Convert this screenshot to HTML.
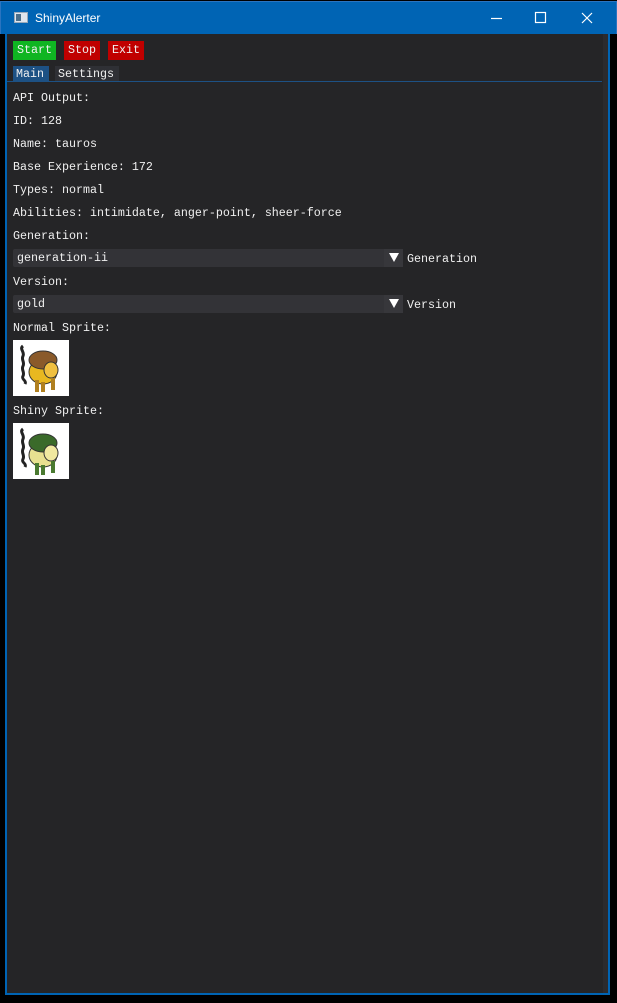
<!DOCTYPE html>
<html><head><meta charset="utf-8"><style>
*{margin:0;padding:0;box-sizing:border-box}
body{width:617px;height:1003px;background:#000;position:relative;overflow:hidden;font-family:"Liberation Mono",monospace;font-size:11.67px;color:#f0f0f0}
.tb{position:absolute;left:0;top:1px;width:617px;height:33px;background:#0064b4;border:1px solid #2a74c0;border-bottom:none}
.ttl{position:absolute;left:34px;top:9px;font-family:"Liberation Sans",sans-serif;font-size:12px;color:#fff}
.ico{position:absolute;left:13px;top:10px;width:14px;height:11px;background:#dfe6ee;border:1px solid #9ab}
.ico:before{content:"";position:absolute;left:1px;top:1px;width:5px;height:7px;background:#4a6e8a}
.frame{position:absolute;left:5px;top:34px;width:605px;height:961px;background:#0064b4}
.client{position:absolute;left:7px;top:34px;width:601px;height:959px;background:#252527}
.sb{position:absolute;left:603px;top:34px;width:5px;height:959px;background:#2b2b2e}
.t{position:absolute;left:13px;white-space:pre;line-height:14px}
.btn{position:absolute;top:41px;height:19px;line-height:19px;padding-left:4px;white-space:pre}
.tab{position:absolute;top:66px;height:16px;line-height:17px;padding-left:3px;white-space:pre}
.combo{position:absolute;left:13px;width:390px;height:18px;background:#333337;border-radius:2px}
.combo span{position:absolute;left:4px;top:2px;line-height:14px}
.combo i{position:absolute;right:0;top:0;width:19px;height:18px;background:#37373b}
.combo i:after{content:"";position:absolute;left:5px;top:4px;border-left:5px solid transparent;border-right:5px solid transparent;border-top:9px solid #fff}
.spr{position:absolute;left:13px;width:56px;height:56px;background:#fff}
</style></head><body>
<div class="tb"><div class="ico"></div><div class="ttl">ShinyAlerter</div>
<svg style="position:absolute;left:486px;top:7px" width="110" height="18" fill="none" stroke="#fff" stroke-width="1.2">
<path d="M4 9.5h11"/><rect x="48.5" y="3.5" width="10" height="10"/><path d="M95 4l10 10M105 4l-10 10"/></svg></div>
<div class="frame"></div><div class="client"></div><div class="sb"></div>
<div class="btn" style="left:13px;width:43px;background:#0fb522">Start</div>
<div class="btn" style="left:64px;width:36px;background:#c00000">Stop</div>
<div class="btn" style="left:108px;width:36px;background:#c00000">Exit</div>
<div class="tab" style="left:13px;width:36px;background:#1d5184">Main</div>
<div class="tab" style="left:55px;width:64px;background:#2f3035">Settings</div>
<div style="position:absolute;left:7px;top:81px;width:595px;height:1px;background:#1d5184"></div>
<div class="t" style="top:91px">API Output:</div>
<div class="t" style="top:114px">ID: 128</div>
<div class="t" style="top:137px">Name: tauros</div>
<div class="t" style="top:160px">Base Experience: 172</div>
<div class="t" style="top:183px">Types: normal</div>
<div class="t" style="top:206px">Abilities: intimidate, anger-point, sheer-force</div>
<div class="t" style="top:229px">Generation:</div>
<div class="combo" style="top:249px"><span>generation-ii</span><i></i></div>
<div class="t" style="left:407px;top:252px">Generation</div>
<div class="t" style="top:275px">Version:</div>
<div class="combo" style="top:295px"><span>gold</span><i></i></div>
<div class="t" style="left:407px;top:298px">Version</div>
<div class="t" style="top:321px">Normal Sprite:</div>
<div class="spr" style="top:340px"><svg width="56" height="56"><path d="M10 6c-4 3 2 6 0 10-2 4 2 6 0 10s2 6 0 10 4 4 2 8" stroke="#222" stroke-width="3" fill="none"/><ellipse cx="30" cy="32" rx="14" ry="12" fill="#e8b820" stroke="#333"/><ellipse cx="30" cy="20" rx="14" ry="9" fill="#8a5a2a" stroke="#333"/><ellipse cx="38" cy="30" rx="7" ry="8" fill="#f0c040" stroke="#333"/><path d="M24 40v12M30 42v10M40 38v12" stroke="#b08020" stroke-width="4"/></svg></div>
<div class="t" style="top:404px">Shiny Sprite:</div>
<div class="spr" style="top:423px"><svg width="56" height="56"><path d="M10 6c-4 3 2 6 0 10-2 4 2 6 0 10s2 6 0 10 4 4 2 8" stroke="#222" stroke-width="3" fill="none"/><ellipse cx="30" cy="32" rx="14" ry="12" fill="#e8e090" stroke="#333"/><ellipse cx="30" cy="20" rx="14" ry="9" fill="#3a6a2a" stroke="#333"/><ellipse cx="38" cy="30" rx="7" ry="8" fill="#f0e8a0" stroke="#333"/><path d="M24 40v12M30 42v10M40 38v12" stroke="#4a7a30" stroke-width="4"/></svg></div>
</body></html>
